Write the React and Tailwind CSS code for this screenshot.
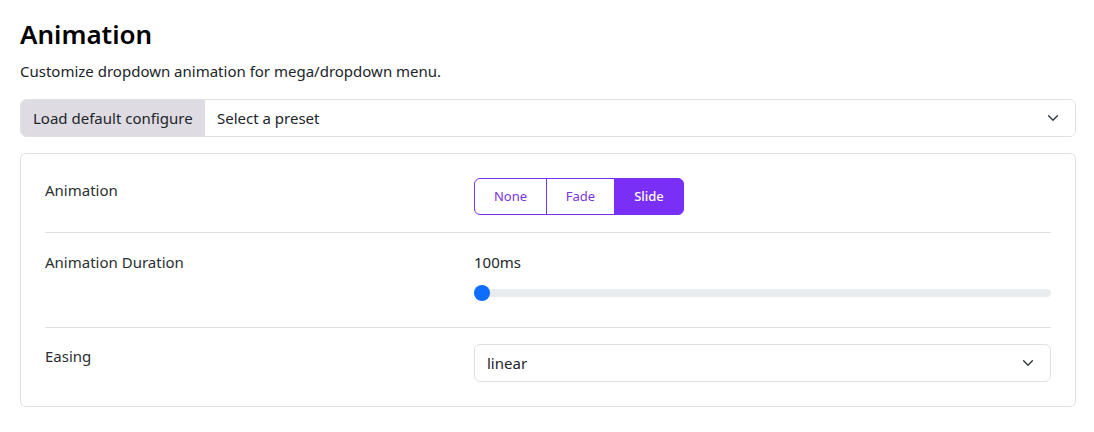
import { useState } from 'react';

// Small chevron used by the select-like controls
function Chevron() {
  return (
    <svg className="w-[14px] h-[14px] text-[#343a40]" viewBox="0 0 16 16" fill="none" stroke="currentColor">
      <path strokeLinecap="round" strokeLinejoin="round" strokeWidth={1.6} d="M3 5.5l5 5 5-5" />
    </svg>
  );
}

function SelectBox({ value, className = '' }) {
  return (
    <div className={`flex items-center justify-between h-[38px] pl-3 pr-[15px] bg-white text-[15px] text-[#212529] ${className}`}>
      <span>{value}</span>
      <Chevron />
    </div>
  );
}

function Segmented({ options, value, onChange }) {
  const widths = { None: 'w-[73px]', Fade: 'w-[69px]', Slide: 'w-[70px]' };
  return (
    <div className="flex h-[37px]">
      {options.map((opt, i) => {
        const active = opt === value;
        return (
          <button
            key={opt}
            onClick={() => onChange(opt)}
            className={`
              ${widths[opt]} h-full text-[13px] border border-[#7a2ff7]
              ${i === 0 ? 'rounded-l-md' : '-ml-px'}
              ${i === options.length - 1 ? 'rounded-r-md' : ''}
              ${active ? 'bg-[#7a2ff7] text-white font-medium' : 'bg-white text-[#7a34e6]'}
            `}
          >
            {opt}
          </button>
        );
      })}
    </div>
  );
}

function Row({ label, children, className = '' }) {
  return (
    <div className={`grid grid-cols-[429px_1fr] ${className}`}>
      <div className="text-[15px] leading-6 text-[#2b2f33]">{label}</div>
      <div>{children}</div>
    </div>
  );
}

export default function App() {
  const [anim, setAnim] = useState('Slide');
  const [duration, setDuration] = useState(100);

  return (
    <div className="pl-5 pr-[18px] pt-[17px] pb-6 bg-white font-['Noto_Sans','Open_Sans',sans-serif] text-[#212529]">
      <h1 className="text-[26px] leading-[34px] font-semibold mb-[9px] text-black">Animation</h1>
      <p className="text-[15px] leading-[22px] mb-[17px]">Customize dropdown animation for mega/dropdown menu.</p>

      <div className="flex h-[38px] border border-[#dee2e6] rounded-md overflow-hidden mb-4">
        <div className="w-[184px] flex items-center px-3 bg-[#dfdbe2] text-[15px] text-[#212529]">
          Load default configure
        </div>
        <SelectBox value="Select a preset" className="flex-1 h-full" />
      </div>

      <div className="border border-[#dee2e6] rounded-md p-6">
        <Row label="Animation" className="pb-[17px] border-b border-[#dee2e6]">
          <Segmented options={['None', 'Fade', 'Slide']} value={anim} onChange={setAnim} />
        </Row>
        <Row label="Animation Duration" className="pt-[17px] pb-[16px] border-b border-[#dee2e6]">
          <div className="text-[15px] leading-6">{duration}ms</div>
          <input
            type="range"
            min={100}
            max={2000}
            value={duration}
            onChange={e => setDuration(Number(e.target.value))}
            className="block w-full h-6 mt-[7px] mb-[6px] appearance-none bg-transparent cursor-pointer
              [&::-webkit-slider-runnable-track]:h-[8px] [&::-webkit-slider-runnable-track]:rounded-full [&::-webkit-slider-runnable-track]:bg-[#e9ecef]
              [&::-webkit-slider-thumb]:appearance-none [&::-webkit-slider-thumb]:w-4 [&::-webkit-slider-thumb]:h-4 [&::-webkit-slider-thumb]:-mt-[4px] [&::-webkit-slider-thumb]:rounded-full [&::-webkit-slider-thumb]:bg-[#0d6efd] [&::-webkit-slider-thumb]:border-0"
          />
        </Row>
        <Row label="Easing" className="pt-[16px]">
          <SelectBox value="linear" className="border border-[#dee2e6] rounded-md" />
        </Row>
      </div>
    </div>
  );
}
